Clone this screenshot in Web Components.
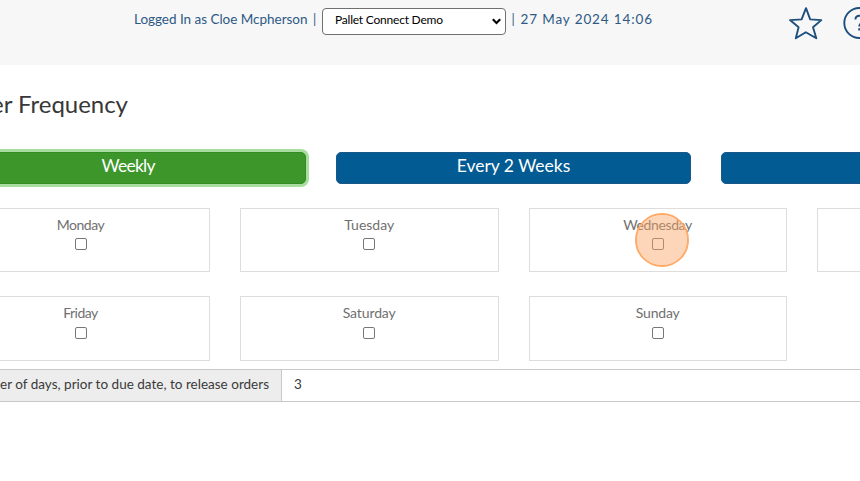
<!DOCTYPE html>
<html lang="en"><head><meta charset="utf-8"><title>Frequency</title>
<style>
html,body{margin:0;height:100%;overflow:hidden;background:#fff}
body{font-family:Lato,"Open Sans",sans-serif;color:#333}
</style></head><body>
<order-page></order-page>
<script>
const define=(name,html,setup)=>customElements.define(name,class extends HTMLElement{
  constructor(){super();this.attachShadow({mode:'open'}).innerHTML=html;}
  connectedCallback(){if(setup)setup(this);}
});
// Text run whose tracking is adjusted so that it fills a given width.
define('tracked-text',`<style>:host{display:inline-block;white-space:pre;flex:none}span{display:inline-block;white-space:pre}</style><span><slot></slot></span>`,el=>{
  const w=+el.getAttribute('w'),s=el.shadowRoot.querySelector('span');
  el.style.width=w+'px';
  s.style.letterSpacing=(w-s.getBoundingClientRect().width)/(el.textContent.length-1)+'px';
});
define('account-select',`<style>
:host{box-sizing:border-box;flex:none;display:flex;align-items:center;justify-content:space-between;width:184px;height:27px;padding:0 4px 4px 12px;border:1px solid #707070;border-radius:4px;background:#fff;color:#000;font-size:12px;line-height:21px}
svg{margin-top:4px}
</style><slot></slot><svg width="9" height="7" viewBox="0 0 9 7" fill="none" stroke="#000" stroke-width="2.1"><path d="M.8 1.2 4.5 4.9 8.2 1.2"/></svg>`);
define('top-bar',`<style>
:host{box-sizing:border-box;display:flex;align-items:flex-start;height:65px;padding:8px 0 0 134px;background:#f7f7f7;color:#2d5985;font-size:13.5px;line-height:23px}
.sep{flex:none;width:14.5px;text-align:center;font-size:13px}
svg{flex:none}.star{margin:-2px 0 0 136px}.help{margin:-1px 0 0 19px}
</style>
<tracked-text w="173.5">Logged In as Cloe Mcpherson</tracked-text><span class="sep">|</span>
<account-select><tracked-text w="108">Pallet Connect Demo</tracked-text></account-select>
<span class="sep">|</span><tracked-text w="131.5">27 May 2024 14:06</tracked-text>
<svg class="star" width="36" height="36" viewBox="0 0 36 36" fill="none" stroke="#1d4f7c" stroke-width="1.9" stroke-linejoin="round"><path d="M18 2.2 22.2 13.4 33.3 14.1 25 21.3 28.3 32.3 17.8 26.2 7.8 32.3 10.6 21.3 2 14.1 13.6 13.4Z"/></svg>
<svg class="help" width="34" height="34" viewBox="0 0 34 34" fill="none" stroke="#1d4f7c" stroke-width="1.9"><circle cx="16.3" cy="16" r="15"/><path d="M12.4 12.5c.2-5 8-5 8 0 0 3-4.2 3.2-4.2 7M16.2 21.3v2.1"/></svg>`);
define('frequency-button',`<style>
:host{box-sizing:border-box;display:flex;justify-content:center;height:32px;border:1px solid #1b5689;border-radius:5px;background:#035b94;color:#fff;font-size:17.5px;line-height:26px}
:host([active]){background:#3c962a;border-color:#338b23;box-shadow:0 0 0 3px #a9dda0}
</style><slot></slot>`);
define('day-card',`<style>
:host{box-sizing:border-box;display:flex;flex-direction:column;align-items:center;border:1px solid #ddd;padding-top:7px;color:#707070;font-size:14px;line-height:17px;background:#fff;position:relative}
i{box-sizing:border-box;display:block;width:12px;height:12px;margin-top:5px;border:1px solid #777;border-radius:2px;background:#fff}
:host([second]) i{margin-top:6px}
b{display:none;position:absolute;left:105px;top:3.5px;width:50px;height:50px;border:2px solid #ffaa68;border-radius:50%;background:rgba(251,165,99,.45);background-clip:padding-box}
:host([marked]) b{display:block}
</style><slot></slot><i></i><b></b>`);
define('release-field',`<style>
:host{box-sizing:border-box;display:flex;height:33px;border:solid #c8c8c8;border-width:1px 0;font-size:13.5px;line-height:29px;color:#3a3a3a}
.label{box-sizing:border-box;width:282px;border-right:1px solid #c8c8c8;background:#ededed}
.value{padding-left:12px}
</style><div class="label"><slot name="label"></slot></div><div class="value"><slot name="value"></slot></div>`);
define('order-page',`<style>
:host{display:block;width:860px;height:481px;overflow:hidden;background:#fff}
h1{margin:0 0 0 -9px;padding-top:23px;height:64px;font-size:24px;line-height:31px;font-weight:400;color:#383838}
.buttons{display:grid;grid-template-columns:repeat(3,355px);gap:30px;margin-left:-49px}
.days{display:grid;grid-template-columns:repeat(4,258.5px);grid-template-rows:64px 65px;gap:24px 30px;margin:24px 0 8px -48.5px}
</style>
<top-bar></top-bar>
<h1><tracked-text w="137">er Frequency</tracked-text></h1>
<div class="buttons"><frequency-button active><tracked-text w="54">Weekly</tracked-text></frequency-button><frequency-button><tracked-text w="113.5">Every 2 Weeks</tracked-text></frequency-button><frequency-button></frequency-button></div>
<div class="days">
<day-card><tracked-text w="48">Monday</tracked-text></day-card><day-card><tracked-text w="50">Tuesday</tracked-text></day-card><day-card marked><tracked-text w="69">Wednesday</tracked-text></day-card><day-card></day-card>
<day-card second><tracked-text w="35">Friday</tracked-text></day-card><day-card second><tracked-text w="53">Saturday</tracked-text></day-card><day-card second><tracked-text w="44">Sunday</tracked-text></day-card>
</div>
<release-field><tracked-text slot="label" w="269">er of days, prior to due date, to release orders</tracked-text><span slot="value">3</span></release-field>`);
</script></body></html>
